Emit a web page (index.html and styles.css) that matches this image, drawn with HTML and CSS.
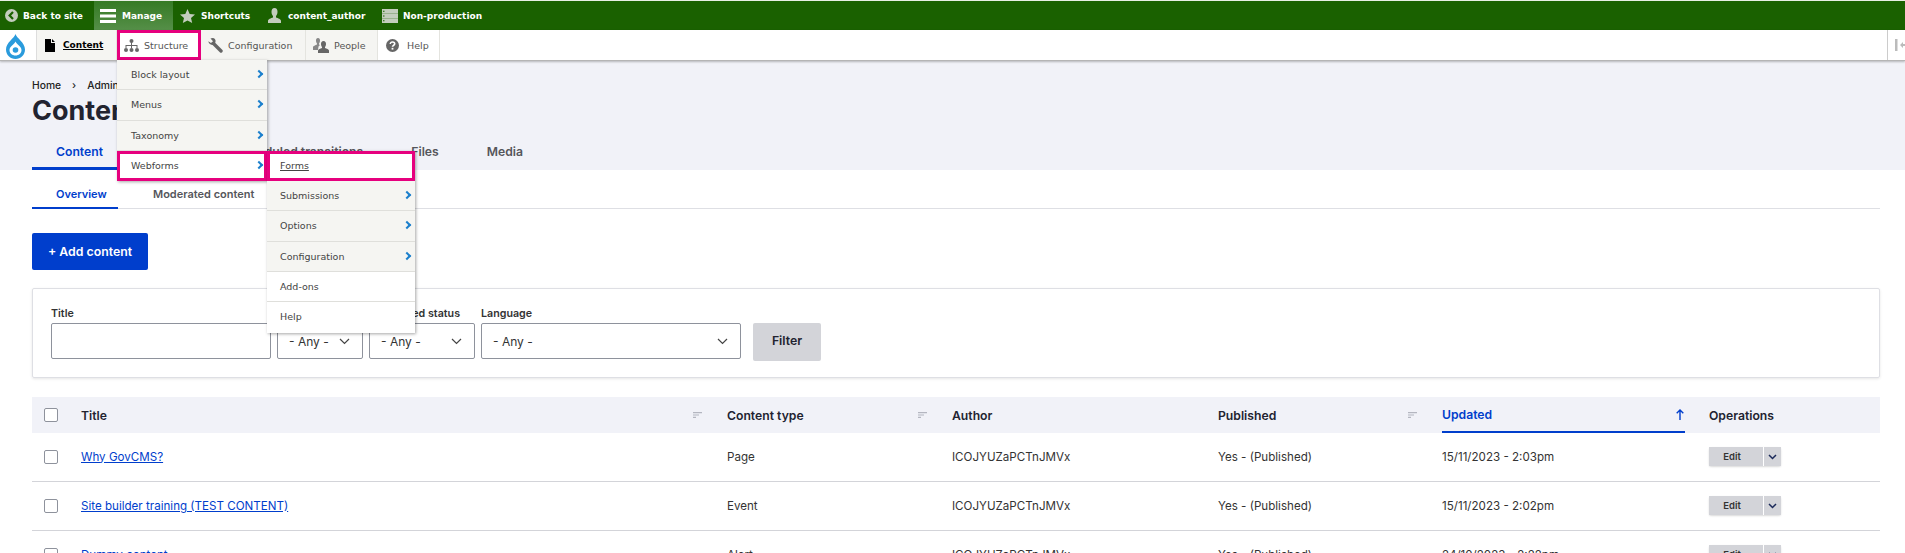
FILE: index.html
```html
<!DOCTYPE html>
<html lang="en">
<head>
    <meta charset="UTF-8">
    <title>Content</title>
    <link rel="stylesheet" href="styles.css">
</head>
<body>
    <div id="topbar">
        <a class="bar-item back"><svg width="13" height="13" viewBox="0 0 13 13"><circle cx="6.500" cy="6.500" r="6.500" fill="#c3cdbd"/><path d="M8 3 4.600 6.500 8 10" fill="none" stroke="#1a6100" stroke-width="2.200"/></svg>Back to site</a>
        <a class="bar-item manage"><svg width="16" height="14" viewBox="0 0 16 14"><path d="M0 0h16v3H0zM0 5.500h16v3H0zM0 11h16v3H0z" fill="#fff"/></svg>Manage</a>
        <a class="bar-item shortcuts"><svg width="15" height="14" viewBox="0 0 15 14"><path d="M7.500 0 9.700 4.900 15 5.400 11 9 12.200 14 7.500 11.400 2.800 14 4 9 0 5.400 5.300 4.900z" fill="#c3cdbd"/></svg>Shortcuts</a>
        <a class="bar-item user"><svg width="13" height="15" viewBox="0 0 13 15"><path d="M6.500 0C8.500 0 9.500 1.500 9.500 3.700 9.500 5.700 8.800 7.200 8 8V9.500C10 10.200 13 11 13 13V15H0V13C0 11 3 10.200 5 9.500V8C4.200 7.200 3.500 5.700 3.500 3.700 3.500 1.500 4.500 0 6.500 0Z" fill="#c3cdbd"/></svg>content_author</a>
        <a class="bar-item env"><svg width="16" height="14" viewBox="0 0 16 14"><path d="M0 0h16v4.400H0zM0 4.800h16v4.400H0zM0 9.600h16V14H0z" fill="#c3cdbd"/><path d="M1 1.700h1.500v1H1zM1 6.500h1.500v1H1zM1 11.300h1.500v1H1z" fill="#1a6100"/></svg>Non-production</a>
    </div>

    <div id="tray">
        <a class="logo"><svg width="19" height="25" viewBox="0 0 19 25"><path d="M9.500 0C10.500 4 19 8.500 19 15.500 19 21 14.700 25 9.500 25 4.300 25 0 21 0 15.500 0 8.500 8.500 4 9.500 0Z" fill="#2a9bdc"/><path d="M9.500 7.500C10.500 10.500 15.500 12.500 15.500 16 15.500 19.300 12.800 21.500 9.500 21.500 6.200 21.500 3.500 19.300 3.500 16 3.500 12.500 8.500 10.500 9.500 7.500Z" fill="#fff"/><circle cx="9.500" cy="16" r="2.800" fill="#2a9bdc"/></svg></a>
        <ul class="tray-list">
            <li class="tray-item t-content"><svg width="10" height="13" viewBox="0 0 10 13"><path d="M0 0h6v4h4v9H0zM7 0l3 3H7z" fill="#000"/></svg><a>Content</a></li>
            <li class="tray-item t-structure">
                <svg width="15" height="13" viewBox="0 0 15 13"><circle cx="7.500" cy="2" r="2" fill="#666"/><path d="M7 3h1v3h5.500v3h-1V7H8v2H7V7H2.500v2h-1V6H7z" fill="#666"/><circle cx="2" cy="11" r="2" fill="#666"/><circle cx="7.500" cy="11" r="2" fill="#666"/><circle cx="13" cy="11" r="2" fill="#666"/></svg><a>Structure</a>
                <ul class="menu">
                    <li>Block layout<i class="chev"></i></li>
                    <li>Menus<i class="chev"></i></li>
                    <li>Taxonomy<i class="chev"></i></li>
                    <li class="picked">Webforms<i class="chev"></i>
                        <ul class="menu sub">
                            <li class="picked forms"><a>Forms</a></li>
                            <li>Submissions<i class="chev"></i></li>
                            <li>Options<i class="chev"></i></li>
                            <li>Configuration<i class="chev"></i></li>
                            <li class="plain">Add-ons</li>
                            <li class="plain">Help</li>
                        </ul>
                    </li>
                </ul>
            </li>
            <li class="tray-item t-config"><svg width="15" height="15" viewBox="0 0 15 15"><path d="M5.500 5.500 13 13" stroke="#666" stroke-width="3.400" stroke-linecap="round"/><path d="M2.500 0.500 4.500 0C6.800 0 8 1.800 7.500 4L6 7C3.500 7.500 .5 6 .3 3.300L3 5 5 3.200Z" fill="#666"/></svg><a>Configuration</a></li>
            <li class="tray-item t-people"><svg width="16" height="15" viewBox="0 0 16 15"><path d="M5 0C6.500 0 7 1.200 7 2.500 7 3.800 6.500 5 6 5.500V6.500L7 7 5.500 8.500 5 12H0V9C0 8 2.500 7.300 4 6.500V5.500C3.500 5 3 3.800 3 2.500 3 1.200 3.500 0 5 0Z" fill="#888"/><path d="M10.500 3C12.300 3 13 4.400 13 6 13 7.400 12.500 8.500 12 9V10C13.500 10.700 16 11.300 16 12.500V15H5V12.500C5 11.300 7.500 10.700 9 10V9C8.500 8.500 8 7.400 8 6 8 4.400 8.700 3 10.500 3Z" fill="#666"/></svg><a>People</a></li>
            <li class="tray-item t-help"><svg width="13" height="13" viewBox="0 0 13 13"><circle cx="6.500" cy="6.500" r="6.500" fill="#666"/><path d="M4.300 5C4.300 3.700 5.300 3 6.500 3 7.800 3 8.700 3.800 8.700 4.800 8.700 6.300 6.500 6.300 6.500 7.800" fill="none" stroke="#fff" stroke-width="1.600"/><rect x="5.600" y="8.800" width="1.800" height="1.800" fill="#fff"/></svg><a>Help</a></li>
        </ul>
        <a class="tray-toggle"><svg width="11" height="12" viewBox="0 0 11 12"><path d="M0 0h2.500v12H0z" fill="#bbb"/><path d="M5 6 8 3v2h3v2H8v2z" fill="#bbb"/></svg></a>
    </div>

    <div id="header">
        <div class="crumbs"><a>Home</a><span class="sep">›</span><a>Administration</a></div>
        <h1>Content</h1>
        <ul class="tabs">
            <li class="on">Content</li>
            <li class="tab-sched">Scheduled transitions</li>
            <li>Files</li>
            <li>Media</li>
        </ul>
    </div>

    <div id="main">
        <ul class="subtabs">
            <li class="on">Overview</li>
            <li>Moderated content</li>
        </ul>
        <a class="add-btn">+ Add content</a>

        <form class="filters">
            <div class="field f-title"><label>Title</label><input type="text"></div>
            <div class="field f-type"><label>Content type</label><div class="select">- Any -<svg class="down" width="11" height="7" viewBox="0 0 11 7"><path d="M1 1l4.500 4.500L10 1" fill="none" stroke="#444" stroke-width="1.200"/></svg></div></div>
            <div class="field f-status"><label>Moderated status</label><div class="select">- Any -<svg class="down" width="11" height="7" viewBox="0 0 11 7"><path d="M1 1l4.500 4.500L10 1" fill="none" stroke="#444" stroke-width="1.200"/></svg></div></div>
            <div class="field f-lang"><label>Language</label><div class="select">- Any -<svg class="down" width="11" height="7" viewBox="0 0 11 7"><path d="M1 1l4.500 4.500L10 1" fill="none" stroke="#444" stroke-width="1.200"/></svg></div></div>
            <a class="filter-btn">Filter</a>
        </form>

        <table class="list">
            <colgroup>
                <col class="c-check"><col class="c-title"><col class="c-type"><col class="c-author"><col class="c-pub"><col class="c-upd"><col>
            </colgroup>
            <thead>
                <tr>
                    <th class="cb"><span class="box"></span></th>
                    <th><span class="th-in">Title<svg class="sort" width="9" height="6" viewBox="0 0 9 6"><path d="M0 0h9v1.200H0zM0 2.400h6v1.200H0zM0 4.800h3V6H0z" fill="#b4b6c0"/></svg></span></th>
                    <th><span class="th-in">Content type<svg class="sort" width="9" height="6" viewBox="0 0 9 6"><path d="M0 0h9v1.200H0zM0 2.400h6v1.200H0zM0 4.800h3V6H0z" fill="#b4b6c0"/></svg></span></th>
                    <th>Author</th>
                    <th><span class="th-in">Published<svg class="sort" width="9" height="6" viewBox="0 0 9 6"><path d="M0 0h9v1.200H0zM0 2.400h6v1.200H0zM0 4.800h3V6H0z" fill="#b4b6c0"/></svg></span></th>
                    <th class="sorted"><span class="th-in">Updated<svg width="8" height="11" viewBox="0 0 8 11"><path d="M4 11V1M.7 4.300 4 1l3.300 3.300" fill="none" stroke="#003ecc" stroke-width="1.400"/></svg></span></th>
                    <th>Operations</th>
                </tr>
            </thead>
            <tbody>
                <tr>
                    <td class="cb"><span class="box"></span></td>
                    <td><a>Why GovCMS?</a></td>
                    <td>Page</td>
                    <td>ICOJYUZaPCTnJMVx</td>
                    <td>Yes - (Published)</td>
                    <td>15/11/2023 - 2:03pm</td>
                    <td><div class="ops"><span class="edit">Edit</span><span class="more"><svg width="9" height="6" viewBox="0 0 9 6"><path d="M1 1l3.500 3.500L8 1" fill="none" stroke="#1b2a5a" stroke-width="1.500"/></svg></span></div></td>
                </tr>
                <tr>
                    <td class="cb"><span class="box"></span></td>
                    <td><a>Site builder training (TEST CONTENT)</a></td>
                    <td>Event</td>
                    <td>ICOJYUZaPCTnJMVx</td>
                    <td>Yes - (Published)</td>
                    <td>15/11/2023 - 2:02pm</td>
                    <td><div class="ops"><span class="edit">Edit</span><span class="more"><svg width="9" height="6" viewBox="0 0 9 6"><path d="M1 1l3.500 3.500L8 1" fill="none" stroke="#1b2a5a" stroke-width="1.500"/></svg></span></div></td>
                </tr>
                <tr>
                    <td class="cb"><span class="box"></span></td>
                    <td><a>Dummy content</a></td>
                    <td>Alert</td>
                    <td>ICOJYUZaPCTnJMVx</td>
                    <td>Yes - (Published)</td>
                    <td>24/10/2023 - 2:22pm</td>
                    <td><div class="ops"><span class="edit">Edit</span><span class="more"><svg width="9" height="6" viewBox="0 0 9 6"><path d="M1 1l3.500 3.500L8 1" fill="none" stroke="#1b2a5a" stroke-width="1.500"/></svg></span></div></td>
                </tr>
            </tbody>
        </table>
    </div>
</body>
</html>
```

FILE: styles.css
```css
*{
    padding: 0;
    margin: 0;
    box-sizing: border-box;
}
ul{
    list-style: none;
}
html,body{
    height: 553px;
    overflow: hidden;
}
body{
    font-family: Inter, "Liberation Sans", sans-serif;
    font-size: 11.6px;
    color: #333;
    background: #fff;
}

/* top green bar */
#topbar{
    display: flex;
    height: 30px;
    border-top: 1px solid #e8efe4;
    background: #1a6100;
    padding-left: 5px;
    font-family: "DejaVu Sans", sans-serif;
    font-size: 9px;
    font-weight: bold;
    color: #fff;
}
.bar-item{
    display: flex;
    align-items: center;
}
.bar-item svg{
    flex: none;
}
.back{
    width: 89px;
    gap: 5px;
}
.manage{
    width: 79px;
    gap: 6px;
    padding-left: 6px;
    background: linear-gradient(#357a24, #558f48);
}
.shortcuts{
    width: 95px;
    gap: 6px;
    padding-left: 7px;
}
.user{
    width: 114px;
    gap: 7px;
}
.env{
    gap: 5px;
}

/* second toolbar */
#tray{
    display: flex;
    height: 31px;
    background: #fff;
    border-bottom: 1px solid #b5b5b5;
    box-shadow: 0 1px 2px rgba(0,0,0,.25);
    position: relative;
    z-index: 5;
    font-family: "DejaVu Sans", sans-serif;
    font-size: 9.500px;
    color: #555;
}
.logo{
    width: 37px;
    border-right: 1px solid #ddd;
    display: flex;
    align-items: center;
    padding: 3px 0 0 6px;
}
.tray-list{
    display: flex;
}
.tray-item{
    display: flex;
    align-items: center;
    height: 30px;
    background: #f5f5f2;
    border-right: 1px solid #e4e4df;
    position: relative;
}
.tray-item svg{
    flex: none;
}
.t-content{
    width: 80px;
    gap: 8px;
    padding-left: 8px;
    color: #000;
    font-size: 9px;
    font-weight: bold;
}
.t-content a{
    text-decoration: underline;
}
.t-structure{
    width: 84px;
    gap: 5px;
    padding-left: 7px;
    background: #fff;
    border-right: 0;
    outline: 3px solid #e6007e;
    outline-offset: -3px;
    z-index: 1;
}
.t-config{
    width: 105px;
    gap: 5px;
    padding-left: 7px;
}
.t-people{
    width: 72px;
    gap: 5px;
    padding-left: 7px;
}
.t-help{
    width: 62px;
    gap: 8px;
    padding-left: 8px;
    background: #fff;
}
.tray-toggle{
    margin-left: auto;
    width: 18px;
    height: 30px;
    border-left: 1px solid #ccc;
    display: flex;
    align-items: center;
    padding-left: 7px;
    overflow: hidden;
}
.tray-toggle svg{
    flex: none;
}

/* dropdown menus */
.menu{
    position: absolute;
    left: 0;
    top: 30px;
    width: 150px;
    background: #f5f5f2;
    box-shadow: 1px 1px 3px rgba(0,0,0,.35);
    color: #444;
    font-weight: normal;
}
.menu li{
    position: relative;
    height: 30.300px;
    line-height: 29px;
    padding-left: 14px;
    border-bottom: 1px solid #dfdfdb;
}
.menu .picked{
    background: #fff;
    outline: 3px solid #e6007e;
    outline-offset: -3px;
    border-bottom: 0;
}
.chev{
    position: absolute;
    right: 5px;
    top: 11px;
    width: 6px;
    height: 6px;
    border-top: 2px solid #1b7fcc;
    border-right: 2px solid #1b7fcc;
    transform: rotate(45deg);
}
.sub{
    left: 150px;
    top: 0;
    width: 148px;
    background: #f5f5f2;
}
.sub li{
    padding-left: 13px;
}
.sub .plain{
    background: #fff;
}
.sub .plain:last-child{
    border-bottom: 0;
}
.forms a{
    text-decoration: underline;
}

/* page head */
#header{
    height: 109px;
    background: #f1f2f8;
    padding: 17px 32px 0;
}
.crumbs{
    font-size: 10.300px;
    font-weight: 500;
    color: #222;
    display: flex;
    gap: 11px;
    height: 14px;
    line-height: 14px;
}
h1{
    font-size: 27px;
    line-height: 33px;
    font-weight: 700;
    color: #222330;
    margin-top: 2px;
}
.tabs{
    display: flex;
    margin-top: 10px;
    font-size: 12.200px;
    font-weight: 600;
    color: #55565b;
}
.tabs li{
    height: 33px;
    padding: 7px 24px 0;
}
.tabs .on{
    width: 94px;
    color: #003ecc;
    border-bottom: 3px solid #003ecc;
}
.tabs .tab-sched{
    padding-left: 109px;
}

/* main area */
#main{
    padding: 0 25px 0 32px;
}
.subtabs{
    display: flex;
    height: 39px;
    border-bottom: 1px solid #dedfe4;
    font-size: 11px;
    font-weight: 600;
    color: #55565b;
}
.subtabs li{
    padding: 17px 0 0 35px;
}
.subtabs .on{
    width: 86px;
    padding-left: 24px;
    color: #003ecc;
    border-bottom: 2px solid #003ecc;
    height: 39px;
}
.add-btn{
    display: block;
    width: 116px;
    height: 37px;
    line-height: 37px;
    margin-top: 24px;
    background: #003ecc;
    color: #fff;
    font-size: 12.300px;
    font-weight: 600;
    text-align: center;
    border-radius: 2px;
}
.filters{
    display: flex;
    align-items: flex-end;
    gap: 6px;
    height: 90px;
    margin-top: 18px;
    padding: 0 18px 18px;
    border: 1px solid #dedfe4;
    box-shadow: 0 1px 3px rgba(0,0,0,.1);
    border-radius: 2px;
}
.field label{
    display: block;
    font-size: 10.700px;
    font-weight: 600;
    color: #333;
    margin-bottom: 3px;
    white-space: nowrap;
}
.field input,.select{
    display: flex;
    align-items: center;
    height: 36px;
    width: 100%;
    border: 1px solid #8e929c;
    border-radius: 2px;
    background: #fff;
}
.select{
    padding-left: 11px;
    font-size: 12px;
    color: #333;
    position: relative;
}
.down{
    position: absolute;
    right: 12px;
    top: 14px;
}
.f-title{
    width: 220px;
}
.f-type{
    width: 86px;
}
.f-status{
    width: 106px;
}
.f-lang{
    width: 260px;
}
.filter-btn{
    display: block;
    width: 68px;
    height: 38px;
    line-height: 36px;
    margin-left: 6px;
    margin-bottom: -2px;
    background: #d3d4d9;
    color: #222330;
    font-size: 12.300px;
    font-weight: 600;
    text-align: center;
    border-radius: 2px;
}

/* content table */
.list{
    width: 1848px;
    margin-top: 19px;
    border-collapse: collapse;
    table-layout: fixed;
}
.c-check{
    width: 37px;
}
.c-title{
    width: 646px;
}
.c-type{
    width: 225px;
}
.c-author{
    width: 266px;
}
.c-pub{
    width: 224px;
}
.c-upd{
    width: 267px;
}
.list th{
    height: 36px;
    background: #f1f2f8;
    text-align: left;
    padding: 0 12px;
    font-size: 12.200px;
    font-weight: 600;
    color: #222330;
}
.list td{
    height: 49px;
    padding: 0 12px;
    border-bottom: 1px solid #d3d4d9;
    color: #333;
}
.list tbody tr:first-child td{
    height: 48px;
}
.list a{
    color: #003ecc;
    text-decoration: underline;
}
.list .cb{
    padding: 0 0 0 12px;
}
.box{
    display: block;
    width: 14px;
    height: 14px;
    background: #fff;
    border: 1px solid #8e929c;
    border-radius: 2px;
}
.th-in{
    display: flex;
    justify-content: space-between;
    align-items: center;
    padding-right: 1px;
}
.list .sorted{
    color: #003ecc;
}
.sorted .th-in{
    height: 36px;
    border-bottom: 2px solid #003ecc;
}
.ops{
    display: flex;
    height: 19px;
    width: 72px;
    font-size: 9.500px;
    font-weight: 600;
    color: #333;
    box-shadow: 0 1px 2px rgba(0,0,0,.15);
    border-radius: 2px;
}
.edit{
    width: 54px;
    padding-right: 8px;
    line-height: 19px;
    text-align: center;
    background: #d3d4d9;
}
.more{
    flex: 1;
    margin-left: 1px;
    background: #d3d4d9;
    display: flex;
    align-items: center;
    justify-content: center;
}
```
